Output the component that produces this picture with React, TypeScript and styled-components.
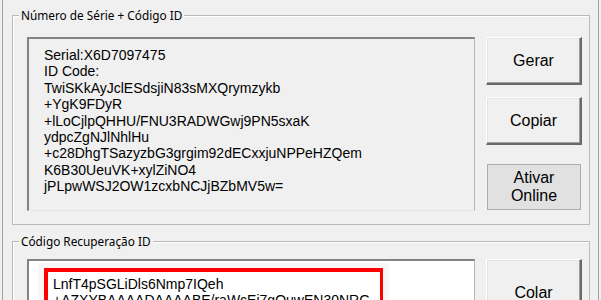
import React from "react"
import styled, { createGlobalStyle } from "styled-components"

const GlobalStyle = createGlobalStyle`
  html, body {
    margin: 0;
    padding: 0;
    background: #f0f0f0;
  }
  body {
    font-family: "Liberation Sans", Arial, sans-serif;
    color: #000;
  }
`

const Panel = styled.div`
  box-sizing: border-box;
  margin-left: 2px;
  width: 597px;
  height: 300px;
  overflow: hidden;
  border-left: 1px solid #a0a0a0;
  border-right: 1px solid #a0a0a0;
  padding: 15px 8px 0 9px;
`

const Group = styled.div<{ $top: number; $height: number }>`
  position: relative;
  box-sizing: border-box;
  display: flex;
  align-items: flex-start;
  margin-top: ${(p) => p.$top}px;
  height: ${(p) => p.$height}px;
  border: 1px solid #b9b9b9;
  box-shadow: inset 1px 1px 0 #fff;
  padding: ${(p) => (p.$top ? "17px" : "21px")} 6px 0 14px;
`

const Legend = styled.span`
  position: absolute;
  top: -9px;
  left: 6px;
  padding: 0 2px;
  background: #f0f0f0;
  font-family: "Noto Sans", "Open Sans", sans-serif;
  font-size: 11.8px;
  line-height: 16px;
  white-space: nowrap;
`

const TextBox = styled.div<{ $white?: boolean }>`
  box-sizing: border-box;
  width: 448px;
  height: 174px;
  flex: none;
  border-top: 2px solid #838383;
  border-left: 2px solid #838383;
  border-right: 1px solid #b4b4b4;
  border-bottom: 1px solid #e3e3e3;
  background: ${(p) => (p.$white ? "#fff" : "#f0f0f0")};
`

const Lines = styled.div`
  padding: 8px 0 0 15px;
  font-size: 14px;
  line-height: 16.4px;
  white-space: nowrap;
`

const Frame = styled.div`
  margin: 2px 0 0 9px;
  width: 345px;
  padding: 5px 0 0 6px;
  background: #f7f7f7;
`

const Marked = styled.div`
  box-sizing: border-box;
  width: 339px;
  border: 4px solid #ff0000;
  border-right-width: 3px;
  background: #fff;
  padding: 4px 0 0 5px;
  font-size: 14px;
  line-height: 16.4px;
  white-space: nowrap;
  overflow: hidden;
`

const Column = styled.div`
  display: flex;
  flex-direction: column;
  align-items: flex-start;
  margin-left: 11px;
  gap: 12px;
`

const Button = styled.button<{ $tall?: boolean }>`
  box-sizing: border-box;
  width: 96px;
  height: ${(p) => (p.$tall ? 68 : 48)}px;
  margin: 0;
  padding: 0;
  background: #f0f0f0;
  border-top: 1px solid #fff;
  border-left: 1px solid #fff;
  border-right: 2px solid #696969;
  border-bottom: 2px solid #696969;
  box-shadow: inset -1px -1px 0 #a0a0a0, inset 1px 1px 0 #e3e3e3;
  font-family: "Liberation Sans", Arial, sans-serif;
  font-size: 16px;
  line-height: 18px;
  color: #000;
`

const FlatButton = styled.button`
  box-sizing: border-box;
  width: 94px;
  height: 46px;
  margin: 7px 0 0 1px;
  padding: 0;
  background: #e1e1e1;
  border: 1px solid #adadad;
  font-family: "Liberation Sans", Arial, sans-serif;
  font-size: 16px;
  line-height: 18px;
  color: #000;
`

const serialLines = [
  "Serial:X6D7097475",
  "ID Code:",
  "TwiSKkAyJclESdsjiN83sMXQrymzykb",
  "+YgK9FDyR",
  "+lLoCjlpQHHU/FNU3RADWGwj9PN5sxaK",
  "ydpcZgNJlNhlHu",
  "+c28DhgTSazyzbG3grgim92dECxxjuNPPeHZQem",
  "K6B30UeuVK+xylZiNO4",
  "jPLpwWSJ2OW1zcxbNCJjBZbMV5w=",
]

const recoveryLines = [
  "LnfT4pSGLiDls6Nmp7IQeh",
  "+AZXYBAAAADAAAABE/raWcEi7gQuwEN30NRG",
  "8DQ4ZtX0pLk",
]

export default function App() {
  return (
    <>
      <GlobalStyle />
      <Panel>
        <Group $top={0} $height={210}>
          <Legend>Número de Série + Código ID</Legend>
          <TextBox>
            <Lines>
              {serialLines.map((l) => (
                <div key={l}>{l}</div>
              ))}
            </Lines>
          </TextBox>
          <Column>
            <Button>Gerar</Button>
            <Button>Copiar</Button>
            <FlatButton>
              Ativar
              <br />
              Online
            </FlatButton>
          </Column>
        </Group>
        <Group $top={16} $height={80}>
          <Legend>Código Recuperação ID</Legend>
          <TextBox $white>
            <Frame>
              <Marked>
                {recoveryLines.map((l) => (
                  <div key={l}>{l}</div>
                ))}
              </Marked>
            </Frame>
          </TextBox>
          <Column>
            <Button $tall>Colar</Button>
          </Column>
        </Group>
      </Panel>
    </>
  )
}
